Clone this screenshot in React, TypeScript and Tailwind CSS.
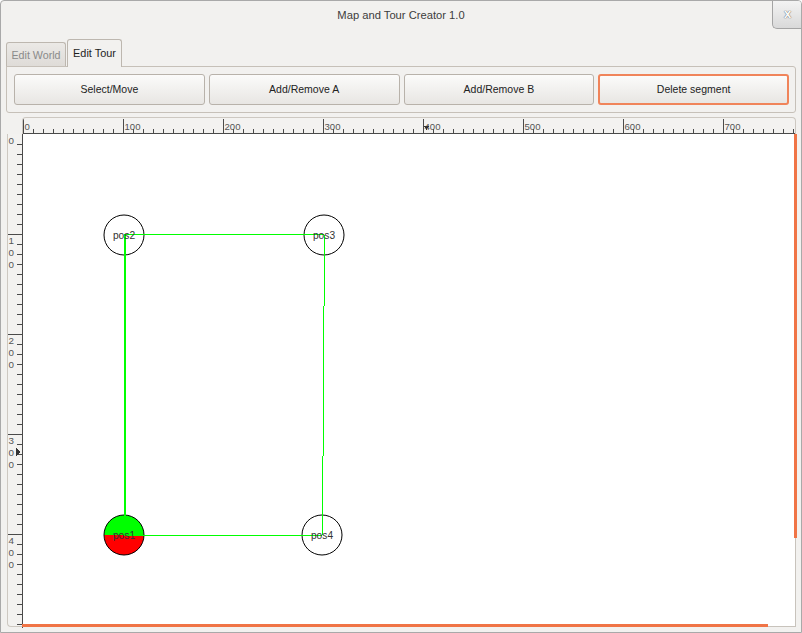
import React from "react";

const ORANGE = "#f07446";

function TopRuler() {
  const ticks: React.ReactElement[] = [];
  for (let k = 0; k <= 77; k++) {
    const x = k * 10 + 0.5;
    const major = k % 10 === 0;
    ticks.push(
      <line key={"t" + k} x1={x} x2={x} y1={major ? 1 : 11} y2={15} stroke="#4a4a4a" strokeWidth={1} />
    );
    if (major) {
      ticks.push(
        <text key={"l" + k} x={k * 10 + 1.5} y={12} fontSize={9.6} fill="#555" fontFamily="'Liberation Sans', Arial, sans-serif">
          {k * 10}
        </text>
      );
    }
  }
  return (
    <svg width={772} height={16} className="block" shapeRendering="crispEdges">
      {ticks}
      <line x1={0} x2={772} y1={15.5} y2={15.5} stroke="#4a4a4a" strokeWidth={1} />
      <polygon points="401,8 406,8 403.5,12" fill="#333" />
    </svg>
  );
}

function LeftRuler() {
  const items: React.ReactElement[] = [];
  for (let k = 1; k <= 49; k++) {
    const y = k * 10 + 0.5;
    const major = k % 10 === 0;
    items.push(
      <line key={"t" + k} x1={major ? 0 : 9} x2={14} y1={y} y2={y} stroke="#4a4a4a" strokeWidth={1} />
    );
  }
  for (let v = 0; v <= 400; v += 100) {
    const s = String(v);
    s.split("").forEach((d, i) => {
      items.push(
        <text
          key={"l" + v + "_" + i}
          x={0.5}
          y={v + 6 + i * 12.4 + 3.5}
          fontSize={9.8}
          fill="#555"
          fontFamily="'Liberation Sans', Arial, sans-serif"
        >
          {d}
        </text>
      );
    });
  }
  return (
    <svg width={14} height={491} className="block" shapeRendering="crispEdges">
      {items}
      <polygon points="8,314 12,318 8,322" fill="#333" />
    </svg>
  );
}

function Node({ cx, cy, split }: { cx: number; cy: number; split?: boolean }) {
  return (
    <g>
      {split ? (
        <>
          <path d={`M ${cx - 20} ${cy} A 20 20 0 0 1 ${cx + 20} ${cy} Z`} fill="#00ff00" />
          <path d={`M ${cx - 20} ${cy} A 20 20 0 0 0 ${cx + 20} ${cy} Z`} fill="#ff0000" />
          <circle cx={cx} cy={cy} r={20} fill="none" stroke="#000" strokeWidth={1} />
        </>
      ) : (
        <circle cx={cx} cy={cy} r={20} fill="#fff" stroke="#000" strokeWidth={1} />
      )}
    </g>
  );
}

function Label({ cx, cy, label }: { cx: number; cy: number; label: string }) {
  return (
    <text
      x={cx}
      y={cy + 3.5}
      fontSize={10.2}
      textAnchor="middle"
      fill="#333"
      fontFamily="'Liberation Sans', Arial, sans-serif"
    >
      {label}
    </text>
  );
}

function Canvas() {
  return (
    <svg width={772} height={492} className="block">
      <Node cx={101} cy={101} />
      <Node cx={301} cy={101} />
      <Node cx={101} cy={401} split />
      <Node cx={299} cy={401} />
      <g shapeRendering="crispEdges">
        <line x1={101.5} x2={101.5} y1={101} y2={401} stroke="#00ff00" strokeWidth={2} />
        <line x1={101} x2={301} y1={100.5} y2={100.5} stroke="#00ff00" strokeWidth={1} />
        <line x1={101} x2={299} y1={401.5} y2={401.5} stroke="#00ff00" strokeWidth={1} />
        <line x1={301.5} x2={299.5} y1={101} y2={401} stroke="#00ff00" strokeWidth={1} />
      </g>
      <Label cx={101} cy={101} label="pos2" />
      <Label cx={301} cy={101} label="pos3" />
      <Label cx={101} cy={401} label="pos1" />
      <Label cx={299} cy={401} label="pos4" />
    </svg>
  );
}

export default function App() {
  const buttons = ["Select/Move", "Add/Remove A", "Add/Remove B", "Delete segment"];
  return (
    <div className="relative w-[802px] h-[633px] bg-[#f2f1ef] border border-[#a9a9a9] rounded-t-[4px] flex flex-col font-['Liberation_Sans',Arial,sans-serif] overflow-hidden">
      {/* Title bar */}
      <div className="h-[29px] flex items-center justify-center text-[11.2px] text-[#3c3c3c]">
        Map and Tour Creator 1.0
      </div>
      <div className="absolute right-[-1px] top-[-1px] w-[30px] h-[29px] rounded-bl-[5px] border-l border-b border-[#a4a4a4] bg-gradient-to-b from-[#f4f4f4] to-[#d9d9d9] flex items-center justify-center text-[13px] font-bold text-[#fafafa] [text-shadow:0_0_1px_#6b6b6b,0_0_1px_#6b6b6b]">
        x
      </div>

      {/* Tabs */}
      <div className="mt-[9px] h-[28px] flex items-end pl-[5px] gap-[1px]">
        <div className="w-[60px] h-[25px] border border-b-0 border-[#bdb7af] rounded-t-[3px] bg-gradient-to-b from-[#ebe9e6] to-[#dedbd7] flex items-center justify-center text-[10.7px] text-[#8a8a8a]">
          Edit World
        </div>
        <div className="relative z-10 w-[55px] h-[28px] border border-b-0 border-[#bdb7af] rounded-t-[3px] bg-[#f2f1ef] flex items-center justify-center text-[10.9px] text-[#1e1e1e] pb-[1px]">
          Edit Tour
        </div>
      </div>

      {/* Panel */}
      <div className="-mt-[1px] mx-[5px] h-[47px] border border-[#c6c0b8] rounded-b-[3px] rounded-tr-[3px] pl-[7px] pr-[6px] pt-[7px] pb-[7px] grid grid-cols-4 gap-[4px]">
        {buttons.map((b, i) => (
          <div
            key={b}
            className={
              i === 3
                ? "h-[31px] rounded-[3px] border-2 border-[#f0845a] bg-gradient-to-b from-[#fbfbfa] to-[#e8e6e3] flex items-center justify-center text-[10.5px] text-[#222]"
                : "h-[31px] rounded-[3px] border border-[#b8b2aa] bg-gradient-to-b from-[#fbfbfa] to-[#e8e6e3] flex items-center justify-center text-[10.5px] text-[#222]"
            }
          >
            {b}
          </div>
        ))}
      </div>

      {/* Rulers + canvas */}
      <div className="mt-[4px] ml-[6px] flex flex-col">
        <div className="flex h-[17px]">
          <div className="w-[15px]" />
          <div className="w-[774px] h-[17px] border-t border-l border-r border-[#cdc8c1] rounded-t-[4px] bg-[#f3f2f0] overflow-hidden">
            <TopRuler />
          </div>
        </div>
        <div className="flex h-[493px]">
          <div className="w-[16px] h-[493px] border-l border-b border-[#cdc8c1] border-r-0 rounded-bl-[4px] bg-[#f3f2f0] flex">
            <div className="w-[14px] overflow-hidden">
              <LeftRuler />
            </div>
            <div className="w-[1px] h-[494px] bg-[#4a4a4a]" />
          </div>
          <div className="relative w-[773px] h-[493px] bg-white border-r border-b border-[#c8c3bc]">
            <Canvas />
            <div className="absolute right-[-2px] top-0 w-[3px] h-[404px]" style={{ backgroundColor: ORANGE }} />
            <div className="absolute left-[-1px] bottom-[-1px] h-[3px] w-[746px]" style={{ backgroundColor: ORANGE }} />
          </div>
        </div>
      </div>
    </div>
  );
}
